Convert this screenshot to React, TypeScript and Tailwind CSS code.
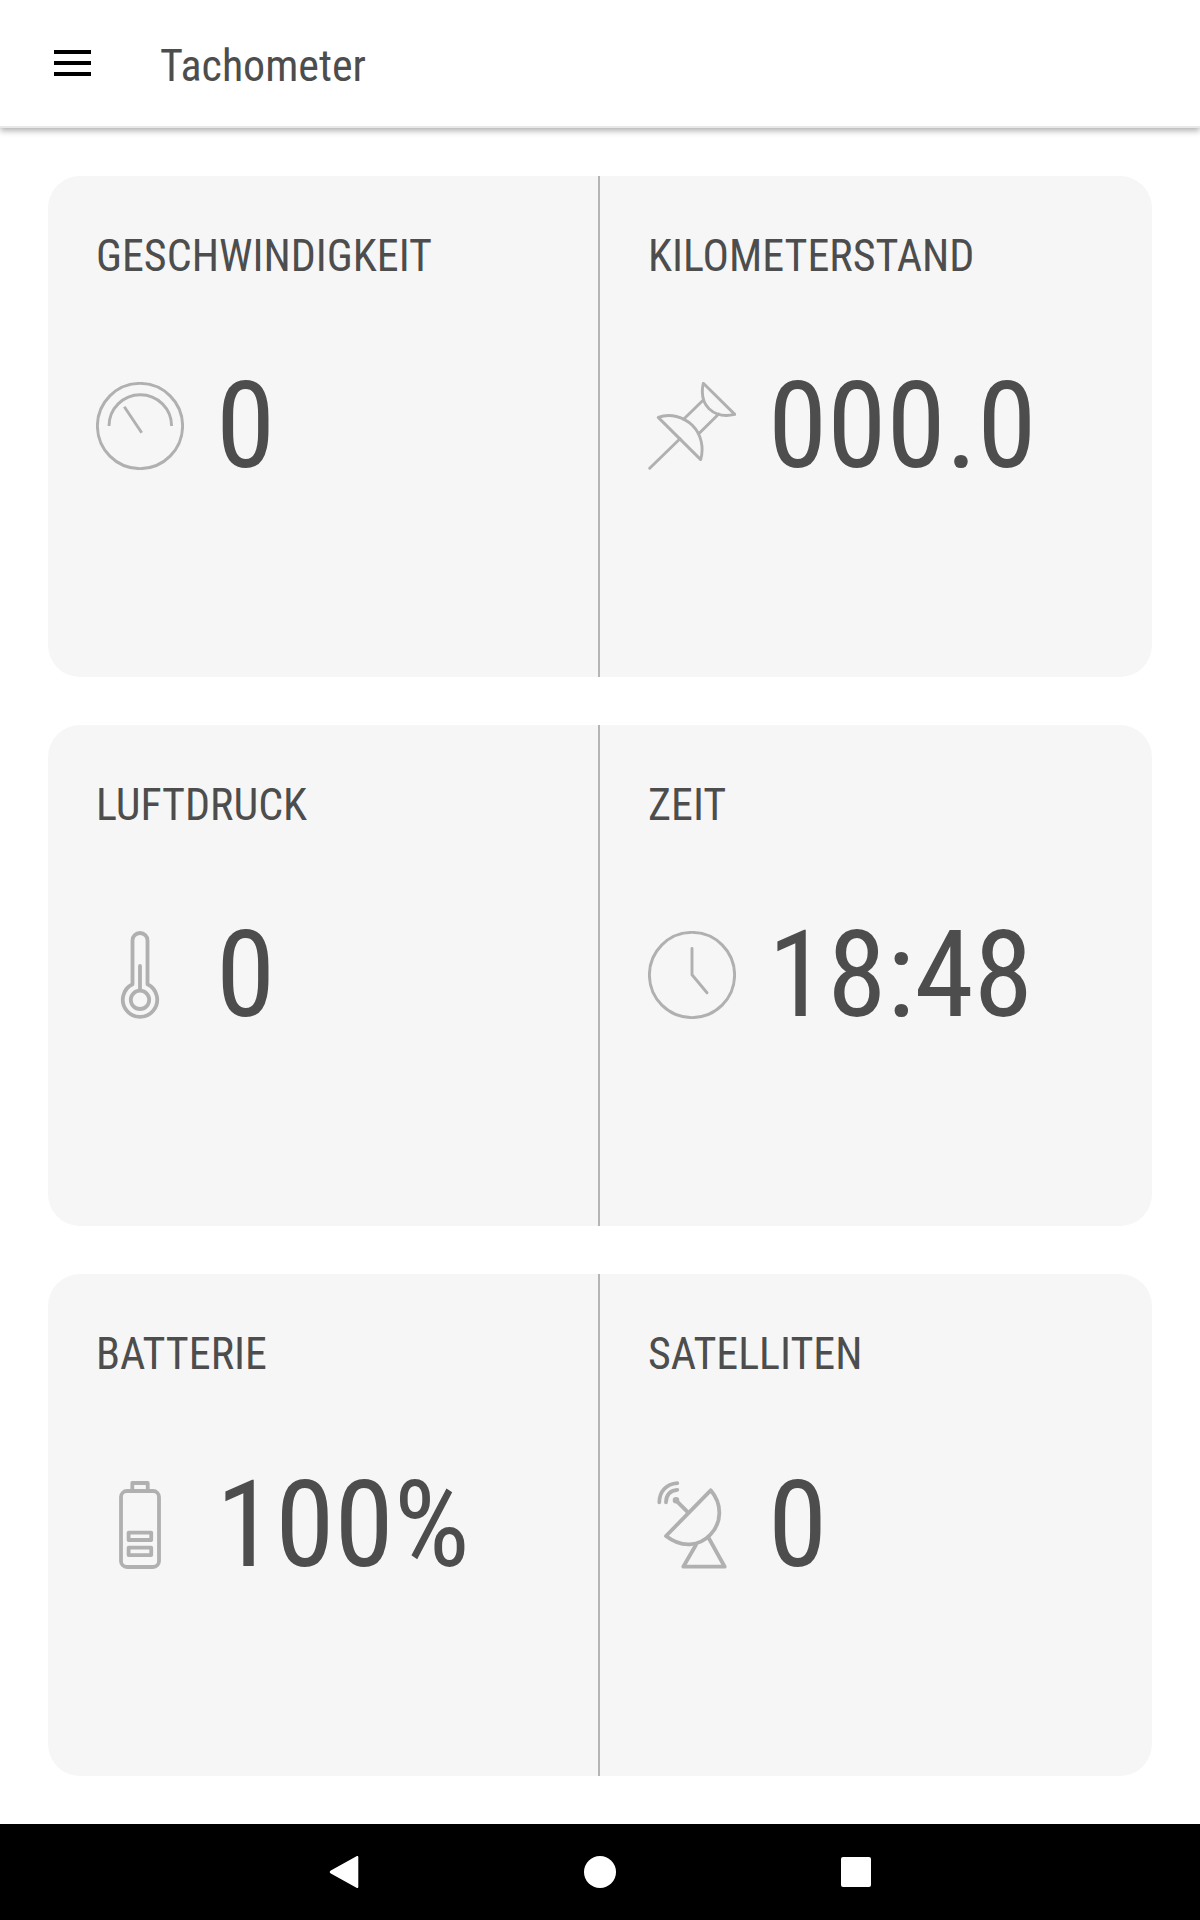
import React from "react";

interface Metric {
  label: string;
  value: string;
  icon: React.ReactNode;
}

const THIN = 2.9;
const THICK = 3.8;

const GaugeIcon = () => (
  <Icon width={THIN}>
    <circle cx="44" cy="44" r="42.6" />
    <path d="M13 44a31.3 31.3 0 0 1 62.6 0" strokeLinecap="butt" />
    <path d="M28.3 24.7 45.7 50.8" strokeLinecap="butt" />
  </Icon>
);

const PinIcon = () => (
  <Icon width={THIN}>
    <path d="M55.3 1.3 86.8 32.4C76 35 67.8 33 61 26.7 54.5 20.3 53 12 55.3 1.3Z" />
    <path d="M55.3 18 35.6 37.3M70.7 32 51 51.5" />
    <path d="M10.2 35.4C22 31.2 35.5 34.5 44.3 43.3 53 52 56.2 65 52.7 77.6Z" />
    <path d="M32 56.7 1.7 86.3" />
  </Icon>
);

const ThermometerIcon = () => (
  <Icon width={THICK}>
    <path d="M36.5 53.2V9.5a7.5 7.5 0 0 1 15 0v43.7a17.2 17.2 0 1 1-15 0Z" />
    <circle cx="44" cy="68.8" r="9.2" />
    <path d="M44 35v24" />
  </Icon>
);

const ClockIcon = () => (
  <Icon width={THIN}>
    <circle cx="44" cy="44" r="42.6" />
    <path d="M44 17.5v26.3l15 18" />
  </Icon>
);

const BatteryIcon = () => (
  <Icon width={THICK}>
    <rect x="25" y="10" width="38" height="76" rx="6" />
    <path d="M36.3 10V2h15.4v8" />
    <rect x="32.6" y="51.6" width="22.6" height="7.4" />
    <rect x="32.6" y="66.7" width="22.6" height="7.4" />
  </Icon>
);

const SatelliteIcon = () => (
  <Icon width={THICK}>
    <path d="M11.3 21.3C11.5 10.5 18 3 29.3 2.1M18 21.3C18.2 14 22 9.5 29.3 8.8" />
    <circle cx="28" cy="19.3" r="1.4" />
    <path d="M28 19.3 40 31.3" />
    <path d="M62.7 9.3 18 55C34 67.5 51.5 65.2 62.5 53.5 74 41.5 74.5 23 62.7 9.3Z" />
    <path d="M48 63.7 35.3 85.7h41.4L60.3 56.3" />
  </Icon>
);

function Icon({ width, children }: { width: number; children: React.ReactNode }) {
  return (
    <svg
      viewBox="0 0 88 88"
      className="size-[88px] shrink-0"
      fill="none"
      stroke="#b0b0b0"
      strokeWidth={width}
      strokeLinejoin="round"
      strokeLinecap="round"
    >
      {children}
    </svg>
  );
}

const rows: [Metric, Metric][] = [
  [
    { label: "Geschwindigkeit", value: "0", icon: <GaugeIcon /> },
    { label: "Kilometerstand", value: "000.0", icon: <PinIcon /> },
  ],
  [
    { label: "Luftdruck", value: "0", icon: <ThermometerIcon /> },
    { label: "Zeit", value: "18:48", icon: <ClockIcon /> },
  ],
  [
    { label: "Batterie", value: "100%", icon: <BatteryIcon /> },
    { label: "Satelliten", value: "0", icon: <SatelliteIcon /> },
  ],
];

function MetricCell({ metric }: { metric: Metric }) {
  return (
    <div className="flex-1 px-12">
      <h2 className="pt-[54px] text-[44px] leading-[53px] uppercase">{metric.label}</h2>
      <div className="mt-[99px] flex items-center gap-8 group-last:mt-[100px]">
        {metric.icon}
        <span className="text-[120px] leading-[88px]">{metric.value}</span>
      </div>
    </div>
  );
}

export default function App() {
  return (
    <div className="flex h-[1920px] w-[1200px] flex-col bg-white font-['Roboto_Condensed','Roboto',sans-serif] font-stretch-condensed text-[#4d4d4d]">
      <header className="flex h-32 shrink-0 items-center border-b-2 border-[#e8e8e8] pl-[54px] shadow-[0_3px_6px_rgba(0,0,0,0.3)]">
        <button aria-label="Menu" className="flex w-[106px] flex-col gap-[7px]">
          <span className="h-1 w-[37px] bg-black" />
          <span className="h-1 w-[37px] bg-black" />
          <span className="h-1 w-[37px] bg-black" />
        </button>
        <h1 className="pt-1.5 text-[44px] leading-[53px]">Tachometer</h1>
      </header>

      <main className="grid flex-1 grid-rows-[501px_501px_502px] gap-12 p-12">
        {rows.map(([left, right]) => (
          <section key={left.label} className="group flex rounded-[32px] bg-[#f6f6f6]">
            <div className="flex w-[552px] border-r-2 border-[#b5b5b5]">
              <MetricCell metric={left} />
            </div>
            <MetricCell metric={right} />
          </section>
        ))}
      </main>

      {/* Android navigation bar */}
      <nav className="flex h-24 shrink-0 items-center justify-center gap-52 bg-black">
        <svg viewBox="0 0 48 48" className="size-12" fill="#fff">
          <path d="M36.5 8.3c1-.6 1.8-.2 1.8 1v29.4c0 1.2-.8 1.6-1.8 1L10.8 25.5c-1.4-.9-1.4-2.1 0-3Z" />
        </svg>
        <svg viewBox="0 0 48 48" className="size-12" fill="#fff">
          <circle cx="24" cy="24" r="16" />
        </svg>
        <svg viewBox="0 0 48 48" className="size-12" fill="#fff">
          <rect x="9" y="9" width="30" height="30" rx="2" />
        </svg>
      </nav>
    </div>
  );
}
